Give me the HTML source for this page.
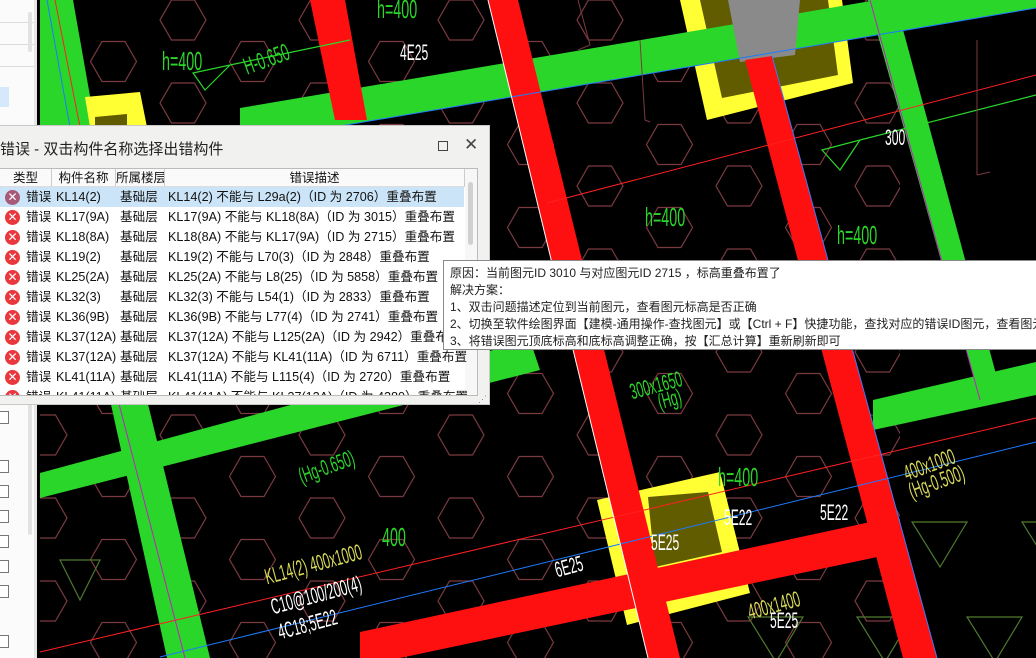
<!DOCTYPE html>
<html><head><meta charset="utf-8">
<style>
*{margin:0;padding:0;box-sizing:border-box}
html,body{width:1036px;height:658px;overflow:hidden}
body{background:#000;position:relative;font-family:"Liberation Sans","Noto Sans CJK SC",sans-serif}
#left{position:absolute;left:0;top:0;width:37px;height:658px;background:#fbfbfb;border-right:3px solid #e6e6e6}
.cb{position:absolute;left:0;width:9px;height:13px;border:1px solid #777;border-left:none;background:#fff}
#dlg{position:absolute;left:0;top:125px;width:490px;height:280px;background:#f1f2f0;border:1px solid #c8c8c8;border-left:none;font-size:12.6px;color:#111}
#title{position:absolute;left:0;top:12px;font-size:15px;color:#222}
#tbl{position:absolute;left:0;top:42px;width:478px;height:228px;background:#fff;border:1px solid #bbb;border-left:none;overflow:hidden}
.hdr{position:absolute;top:0;height:18px;border-right:1px solid #ccc;background:#fafafa;text-align:center;font-size:12.5px;line-height:18px;border-bottom:1px solid #ddd;white-space:nowrap;overflow:hidden}
.row{position:absolute;left:0;width:464px;height:20px;line-height:20px;white-space:nowrap}
.row span{position:absolute}
.ic{position:absolute;left:5px;top:3px;width:15px;height:15px;border-radius:50%;background:#e8373d;color:#fff;font-size:12px;line-height:15px;text-align:center}
#tip{position:absolute;left:443px;top:260px;width:593px;height:90px;background:#fff;border:1px solid #8a8a8a;border-right:none;font-size:12px;color:#222;padding:4px 0 0 6px;line-height:17px;white-space:nowrap;overflow:hidden}
.t{position:absolute;white-space:nowrap;font-family:"Liberation Sans",sans-serif;transform-origin:0 0}
#gband{position:absolute;left:40px;top:0;width:58px;height:130px;background:#2bd62b;clip-path:polygon(0 0,33px 0,56px 130px,0 130px)}
</style></head><body>
<svg width="1036" height="658" style="position:absolute;left:0;top:0">
<defs>
<pattern id="hx" x="44" y="20" width="139" height="83" patternUnits="userSpaceOnUse">
<g fill="none" stroke="#7b3a40" stroke-width="1.2">
<path d="M-23 0L-11.5-20L11.5-20L23 0L11.5 20L-11.5 20Z"/>
<path transform="translate(139 0)" d="M-23 0L-11.5-20L11.5-20L23 0L11.5 20L-11.5 20Z"/>
<path transform="translate(0 83)" d="M-23 0L-11.5-20L11.5-20L23 0L11.5 20L-11.5 20Z"/>
<path transform="translate(139 83)" d="M-23 0L-11.5-20L11.5-20L23 0L11.5 20L-11.5 20Z"/>
<path transform="translate(69.5 41.5)" d="M-23 0L-11.5-20L11.5-20L23 0L11.5 20L-11.5 20Z"/>
</g></pattern>
</defs>
<rect x="40" y="0" width="996" height="658" fill="#000"/>
<rect x="40" y="0" width="860" height="658" fill="url(#hx)"/>
<g fill="none" stroke="#4f7a2e" stroke-width="1.2">
<path d="M912 522L967 522L940 567Z"/><path d="M1022 522L1077 522L1050 567Z"/>
<path d="M748 617L803 617L776 662Z"/><path d="M857 617L912 617L885 662Z"/><path d="M967 617L1022 617L995 662Z"/>
<path d="M60 560L100 560L80 600Z"/>
</g>
<polygon points="680,0 842,0 853,83 707,120" fill="#ffff33"/>
<polygon points="700,0 828,0 838,75 722,98" fill="#625c00"/>
<polygon points="597,500 720,472 750,593 627,625" fill="#ffff33"/>
<polygon points="648,497 708,492 722,552 655,567" fill="#625c00"/>
<polygon points="240,108 1036,-27 1036,8 240,143" fill="#2bd62b"/>
<polygon points="868,0 895,0 1003,400 980,400" fill="#2bd62b"/>
<polygon points="40,473 530,340 540,370 40,498" fill="#2bd62b"/>
<polygon points="873,400 1036,362 1036,395 873,430" fill="#2bd62b"/>
<polygon points="110,400 147,400 210,658 167,658" fill="#2bd62b"/>
<polygon points="728,0 800,0 795,55 740,62" fill="#8a8a8a"/>
<polygon points="310,0 345,0 367,120 335,120" fill="#ff1010"/>
<polygon points="488,0 518,0 680,658 648,658" fill="#ff1010"/>
<polygon points="745,60 772,56 937,658 903,658" fill="#ff1010"/>
<polygon points="360,632 875,521 882,556 400,658 360,658" fill="#ff1010"/>
<line x1="40" y1="652" x2="1036" y2="418" stroke="#ff2020" stroke-width="1"/>
<line x1="160" y1="657" x2="1036" y2="442" stroke="#1e7bff" stroke-width="1"/>
<line x1="547" y1="203" x2="1036" y2="75" stroke="#ff2020" stroke-width="1"/>
<line x1="240" y1="143" x2="1036" y2="8" stroke="#1e7bff" stroke-width="1"/>
<line x1="118" y1="400" x2="185" y2="658" stroke="#c020c0" stroke-width="1"/>
<line x1="870" y1="0" x2="980" y2="400" stroke="#c020c0" stroke-width="1"/>
<line x1="488" y1="0" x2="648" y2="658" stroke="#fff" stroke-width="1"/>
<line x1="772" y1="56" x2="937" y2="658" stroke="#3a7bff" stroke-width="1"/>
<path d="M193 73L230 65L205 90Z M230 65L350 40" fill="none" stroke="#2bd62b" stroke-width="1.2"/>
<path d="M822 150L860 140L840 170Z M860 140L1036 95" fill="none" stroke="#2bd62b" stroke-width="1.2"/>
<g fill="none" stroke="#7b3a40" stroke-width="1"><path d="M640 40L645 120L650 122"/><path d="M977 40L977 175M977 175L990 172"/><path d="M578 0L590 45L578 50"/></g>
</svg>
<div id="gband"></div>
<svg width="1036" height="658" style="position:absolute;left:0;top:0">
<polygon points="85,97 140,92 147,127 90,127" fill="#ffff33"/>
<polygon points="95,117 127,114 127,127 95,127" fill="#625c00"/>
<line x1="47" y1="0" x2="70" y2="127" stroke="#1e7bff" stroke-width="1"/>
<line x1="55" y1="0" x2="80" y2="127" stroke="#ff2020" stroke-width="1"/>
</svg>

<div class="t" style="left:162px;top:46px;font-size:26px;color:#2bd62b;transform:scaleX(.55)">h=400</div>
<div class="t" style="left:377px;top:-6px;font-size:26px;color:#2bd62b;transform:scaleX(.55)">h=400</div>
<div class="t" style="left:645px;top:202px;font-size:26px;color:#2bd62b;transform:scaleX(.55)">h=400</div>
<div class="t" style="left:837px;top:220px;font-size:26px;color:#2bd62b;transform:scaleX(.55)">h=400</div>
<div class="t" style="left:718px;top:462px;font-size:26px;color:#2bd62b;transform:scaleX(.55)">h=400</div>
<div class="t" style="left:382px;top:522px;font-size:26px;color:#2bd62b;transform:scaleX(.55)">400</div>
<div class="t" style="left:240px;top:55px;font-size:24px;color:#2bd62b;transform:rotate(-20deg) scaleX(.55)">H-0.650</div>
<div class="t" style="left:400px;top:40px;font-size:22px;color:#fff;transform:scaleX(.55)">4E25</div>
<div class="t" style="left:627px;top:380px;font-size:22px;color:#2bd62b;transform:rotate(-15deg) scaleX(.55)">300x1650</div>
<div class="t" style="left:655px;top:390px;font-size:22px;color:#2bd62b;transform:rotate(-15deg) scaleX(.55)">(Hg)</div>
<div class="t" style="left:295px;top:465px;font-size:22px;color:#2bd62b;transform:rotate(-20deg) scaleX(.55)">(Hg-0.650)</div>
<div class="t" style="left:262px;top:565px;font-size:22px;color:#d8d85a;transform:rotate(-15deg) scaleX(.55)">KL14(2)  400x1000</div>
<div class="t" style="left:268px;top:595px;font-size:22px;color:#fff;transform:rotate(-15deg) scaleX(.55)">C10@100/200(4)</div>
<div class="t" style="left:275px;top:620px;font-size:22px;color:#fff;transform:rotate(-15deg) scaleX(.55)">4C18;5E22</div>
<div class="t" style="left:900px;top:462px;font-size:22px;color:#d8d85a;transform:rotate(-20deg) scaleX(.55)">400x1000</div>
<div class="t" style="left:905px;top:480px;font-size:22px;color:#d8d85a;transform:rotate(-20deg) scaleX(.55)">(Hg-0.500)</div>
<div class="t" style="left:745px;transform:rotate(-15deg) scaleX(.55);top:600px;font-size:22px;color:#d8d85a">400x1400</div>
<div class="t" style="left:770px;top:608px;font-size:22px;color:#fff;transform:scaleX(.55)">5E25</div>
<div class="t" style="left:820px;top:500px;font-size:22px;color:#fff;transform:scaleX(.55)">5E22</div>
<div class="t" style="left:724px;top:505px;font-size:22px;color:#fff;transform:scaleX(.55)">5E22</div>
<div class="t" style="left:651px;top:530px;font-size:22px;color:#fff;transform:scaleX(.55)">5E25</div>
<div class="t" style="left:552px;top:558px;font-size:22px;color:#fff;transform:rotate(-15deg) scaleX(.55)">6E25</div>
<div class="t" style="left:545px;top:300px;font-size:22px;color:#2bd62b;transform:rotate(90deg) scaleX(.55)">6E25</div>
<div class="t" style="left:885px;top:125px;font-size:22px;color:#fff;transform:scaleX(.55)">300</div>

<div id="left">
<div style="position:absolute;left:0;top:22px;width:34px;border-top:1px solid #ddd"></div>
<div style="position:absolute;left:0;top:44px;width:34px;border-top:1px solid #ddd"></div>
<div style="position:absolute;left:0;top:66px;width:34px;border-top:1px solid #ddd"></div>
<div style="position:absolute;left:0;top:87px;width:9px;height:20px;background:#d6e8fb"></div>
<div style="position:absolute;left:28px;top:12px;width:4px;height:40px;background:#e2e2e2;border-radius:2px"></div>
<div style="position:absolute;left:28px;top:400px;width:4px;height:135px;background:#e2e2e2;border-radius:2px"></div>
<div class="cb" style="top:411px"></div><div class="cb" style="top:460px"></div><div class="cb" style="top:485px"></div><div class="cb" style="top:510px"></div><div class="cb" style="top:535px"></div><div class="cb" style="top:560px"></div><div class="cb" style="top:585px"></div><div class="cb" style="top:635px"></div>
</div>

<div id="dlg">
<div id="title">错误 - 双击构件名称选择出错构件</div>
<div style="position:absolute;left:438px;top:15px;width:10px;height:10px;border:1px solid #444"></div>
<div style="position:absolute;left:464px;top:9px;font-size:17px;color:#444">✕</div>
<div id="tbl">
<div class="hdr" style="left:0;width:52px">类型</div>
<div class="hdr" style="left:52px;width:64px">构件名称</div>
<div class="hdr" style="left:116px;width:49px;text-align:left">所属楼层</div>
<div class="hdr" style="left:165px;width:300px">错误描述</div>
<div style="position:absolute;left:465px;top:0;width:13px;height:228px;background:#f7f7f7"></div>
<div style="position:absolute;left:468px;top:13px;width:5px;height:63px;background:#d0d0d0;border-radius:3px"></div>
<div class="row" style="top:18px;background:#cce4f7"><div class="ic" style="background:#a65a78">✕</div><span style="left:26px">错误</span><span style="left:56px">KL14(2)</span><span style="left:120px">基础层</span><span style="left:168px">KL14(2) 不能与 L29a(2)（ID 为 2706）重叠布置</span></div>
<div class="row" style="top:38px"><div class="ic">✕</div><span style="left:26px">错误</span><span style="left:56px">KL17(9A)</span><span style="left:120px">基础层</span><span style="left:168px">KL17(9A) 不能与 KL18(8A)（ID 为 3015）重叠布置</span></div>
<div class="row" style="top:58px"><div class="ic">✕</div><span style="left:26px">错误</span><span style="left:56px">KL18(8A)</span><span style="left:120px">基础层</span><span style="left:168px">KL18(8A) 不能与 KL17(9A)（ID 为 2715）重叠布置</span></div>
<div class="row" style="top:78px"><div class="ic">✕</div><span style="left:26px">错误</span><span style="left:56px">KL19(2)</span><span style="left:120px">基础层</span><span style="left:168px">KL19(2) 不能与 L70(3)（ID 为 2848）重叠布置</span></div>
<div class="row" style="top:98px"><div class="ic">✕</div><span style="left:26px">错误</span><span style="left:56px">KL25(2A)</span><span style="left:120px">基础层</span><span style="left:168px">KL25(2A) 不能与 L8(25)（ID 为 5858）重叠布置</span></div>
<div class="row" style="top:118px"><div class="ic">✕</div><span style="left:26px">错误</span><span style="left:56px">KL32(3)</span><span style="left:120px">基础层</span><span style="left:168px">KL32(3) 不能与 L54(1)（ID 为 2833）重叠布置</span></div>
<div class="row" style="top:138px"><div class="ic">✕</div><span style="left:26px">错误</span><span style="left:56px">KL36(9B)</span><span style="left:120px">基础层</span><span style="left:168px">KL36(9B) 不能与 L77(4)（ID 为 2741）重叠布置</span></div>
<div class="row" style="top:158px"><div class="ic">✕</div><span style="left:26px">错误</span><span style="left:56px">KL37(12A)</span><span style="left:120px">基础层</span><span style="left:168px">KL37(12A) 不能与 L125(2A)（ID 为 2942）重叠布置</span></div>
<div class="row" style="top:178px"><div class="ic">✕</div><span style="left:26px">错误</span><span style="left:56px">KL37(12A)</span><span style="left:120px">基础层</span><span style="left:168px">KL37(12A) 不能与 KL41(11A)（ID 为 6711）重叠布置</span></div>
<div class="row" style="top:198px"><div class="ic">✕</div><span style="left:26px">错误</span><span style="left:56px">KL41(11A)</span><span style="left:120px">基础层</span><span style="left:168px">KL41(11A) 不能与 L115(4)（ID 为 2720）重叠布置</span></div>
<div class="row" style="top:218px"><div class="ic">✕</div><span style="left:26px">错误</span><span style="left:56px">KL41(11A)</span><span style="left:120px">基础层</span><span style="left:168px">KL41(11A) 不能与 KL37(12A)（ID 为 4280）重叠布置</span></div>
</div>
<div style="position:absolute;left:478px;top:268px;font-size:9px;color:#888">⋰</div>
</div>

<div id="tip">原因：当前图元ID 3010 与对应图元ID 2715 ，标高重叠布置了<br>解决方案：<br>1、双击问题描述定位到当前图元，查看图元标高是否正确<br>2、切换至软件绘图界面【建模-通用操作-查找图元】或【Ctrl + F】快捷功能，查找对应的错误ID图元，查看图元标高是否正确<br>3、将错误图元顶底标高和底标高调整正确，按【汇总计算】重新刷新即可</div>
</body></html>
